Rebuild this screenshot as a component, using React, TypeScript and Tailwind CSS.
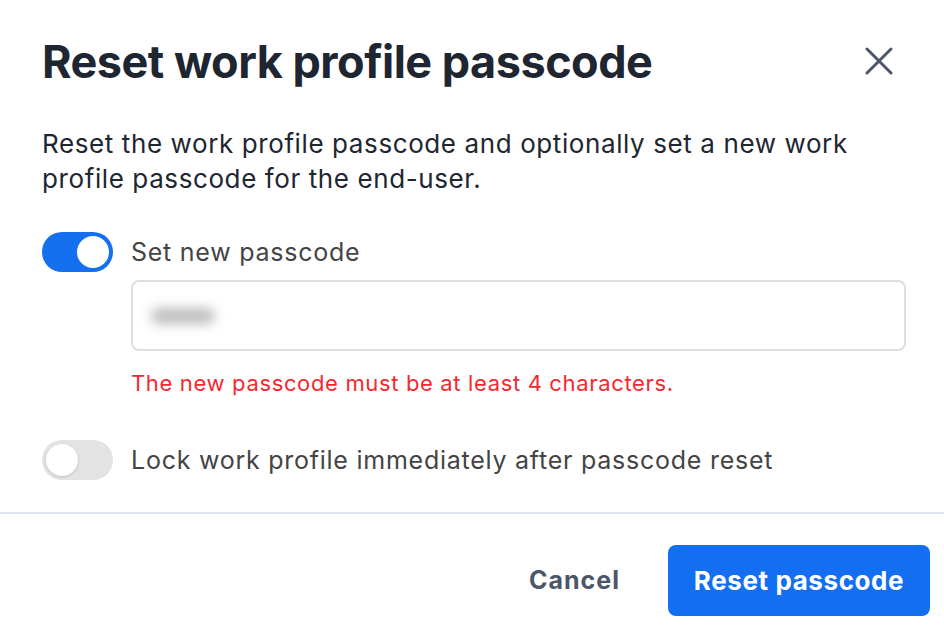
import React from "react";

export default function App() {
  return (
    <div className="w-[944px] h-[642px] bg-white overflow-hidden" style={{ fontFamily: "Inter, 'Noto Sans', sans-serif" }}>
      <div className="flex items-start justify-between pl-[42px] pr-[50px] pt-[34px]">
        <h1 className="text-[45px] leading-[56px] font-bold text-[#1e2631] tracking-[-0.5px]">Reset work profile passcode</h1>
        <button className="mt-[12px] text-[#4b5768]">
          <svg width="30" height="30" viewBox="0 0 30 30" fill="none" stroke="currentColor" strokeWidth="3" strokeLinecap="round">
            <path d="M3 3 L27 27 M27 3 L3 27" />
          </svg>
        </button>
      </div>
      <p className="pl-[42px] pr-[60px] mt-[36px] text-[26px] leading-[35px] tracking-[0.6px] text-[#1e2631]">
        Reset the work profile passcode and optionally set a new work profile passcode for the end-user.
      </p>
      <div className="pl-[42px] mt-[36px] flex items-center gap-[18px]">
        <div className="w-[71px] h-[40px] rounded-full bg-[#1570ef] flex items-center justify-end px-[4px]">
          <div className="w-[32px] h-[32px] rounded-full bg-white" />
        </div>
        <span className="text-[25px] text-[#444] leading-[32px] tracking-[0.75px]">Set new passcode</span>
      </div>
      <div className="pl-[131px] pr-[38px] mt-[8px]">
        <div className="h-[71px] border-2 border-[#dedede] rounded-[8px] flex items-center px-[18px]">
          <div className="w-[64px] h-[16px] rounded-full bg-[#bdbdbd] blur-[6px]" />
        </div>
        <div className="mt-[18px] text-[22px] text-[#f5282f] leading-[28px] tracking-[0.65px]">The new passcode must be at least 4 characters.</div>
      </div>
      <div className="pl-[42px] mt-[43px] flex items-center gap-[18px]">
        <div className="w-[71px] h-[40px] rounded-full bg-[#e3e3e3] flex items-center px-[4px]">
          <div className="w-[32px] h-[32px] rounded-full bg-white shadow-[0_1px_3px_rgba(0,0,0,0.15)]" />
        </div>
        <span className="text-[25px] text-[#444] leading-[32px] tracking-[0.75px]">Lock work profile immediately after passcode reset</span>
      </div>
      <div className="mt-[32px] border-t-2 border-[#dde3ec]" />
      <div className="flex justify-end items-center pr-[14px] pt-[31px] gap-[48px]">
        <button className="text-[25px] font-bold text-[#4b5768] tracking-[1px]">Cancel</button>
        <button className="w-[262px] h-[71px] rounded-[8px] bg-[#136ef2] text-white text-[26px] font-bold tracking-[0.6px]">Reset passcode</button>
      </div>
    </div>
  );
}
